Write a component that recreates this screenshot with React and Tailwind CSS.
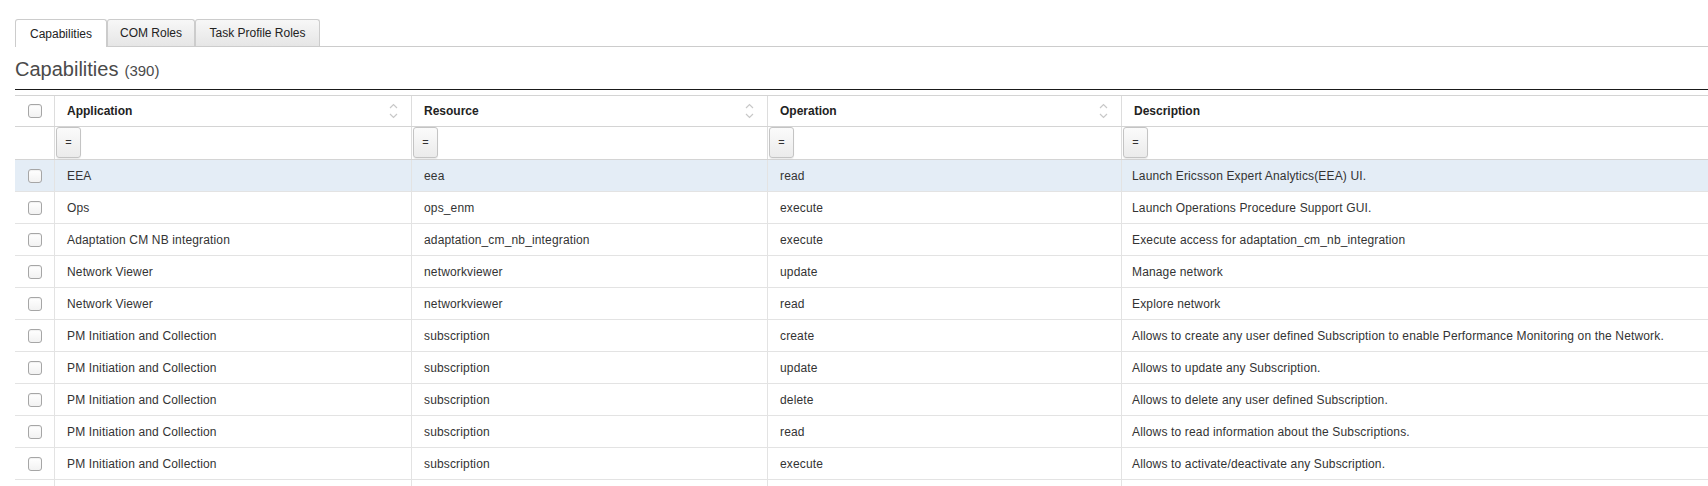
const ROWS = [
  ['EEA', 'eea', 'read', 'Launch Ericsson Expert Analytics(EEA) UI.'],
  ['Ops', 'ops_enm', 'execute', 'Launch Operations Procedure Support GUI.'],
  ['Adaptation CM NB integration', 'adaptation_cm_nb_integration', 'execute', 'Execute access for adaptation_cm_nb_integration'],
  ['Network Viewer', 'networkviewer', 'update', 'Manage network'],
  ['Network Viewer', 'networkviewer', 'read', 'Explore network'],
  ['PM Initiation and Collection', 'subscription', 'create', 'Allows to create any user defined Subscription to enable Performance Monitoring on the Network.'],
  ['PM Initiation and Collection', 'subscription', 'update', 'Allows to update any Subscription.'],
  ['PM Initiation and Collection', 'subscription', 'delete', 'Allows to delete any user defined Subscription.'],
  ['PM Initiation and Collection', 'subscription', 'read', 'Allows to read information about the Subscriptions.'],
  ['PM Initiation and Collection', 'subscription', 'execute', 'Allows to activate/deactivate any Subscription.'],
];

const COLS = 'grid grid-cols-[39px_357px_356px_354px_1fr]';

const Checkbox = () => (
  <span className="block w-[14px] h-[14px] rounded-[3px] border border-[#a6a6a6] bg-gradient-to-b from-white to-[#f2f2f2] shadow-[inset_0_1px_1px_rgba(0,0,0,0.06)]" />
);

const SortIcon = () => (
  <svg width="9" height="16" viewBox="0 0 9 16" fill="none" stroke="#c8c8c8" strokeWidth="1.2">
    <path d="M1 5 L4.5 1.5 L8 5" />
    <path d="M1 11 L4.5 14.5 L8 11" />
  </svg>
);

const Tab = ({ label, width, active }) => (
  <div
    className={`h-[27px] ${width} flex items-center justify-center rounded-t-[3px] border border-b-0 border-[#cccccc] text-[12px] text-[#222]
      ${active ? 'bg-white h-[28px] -mb-px relative' : 'bg-gradient-to-b from-[#f7f7f7] to-[#e6e6e6]'}`}
  >
    {label}
  </div>
);

const HeaderCell = ({ label, sortable }) => (
  <div className="border-l border-[#dddddd] flex items-center justify-between pl-[12px] pr-[13px]">
    <span className="font-bold text-[12px] text-[#222]">{label}</span>
    {sortable && <SortIcon />}
  </div>
);

const FilterCell = () => (
  <div className="border-l border-[#dddddd] pl-px">
    <div className="w-[25px] h-[31px] rounded-[3px] border border-[#c4c4c4] bg-gradient-to-b from-[#fbfbfb] to-[#ebebeb] flex items-center justify-center text-[11px] text-[#333] shadow-[0_1px_1px_rgba(0,0,0,0.08)]">
      =
    </div>
  </div>
);

export default function App() {
  return (
    <div className="w-[1708px] h-[486px] overflow-hidden bg-white font-['Liberation_Sans',Arial,sans-serif] text-[12px] text-[#333]">
      <div className="pl-[15px] pt-[19px]">
        <div className="flex items-end h-[28px] border-b border-[#cccccc]">
          <Tab label="Capabilities" width="w-[92px]" active />
          <Tab label="COM Roles" width="w-[88px]" />
          <Tab label="Task Profile Roles" width="w-[125px]" />
        </div>

        <div className="h-[43px] pt-[10px] border-b border-[#1a1a1a] flex items-baseline">
          <span className="text-[20px] leading-[24px] text-[#4a4a4a]">Capabilities</span>
          <span className="ml-[6px] text-[15px] leading-[24px] text-[#4a4a4a]">(390)</span>
        </div>

        <div className="mt-[5px]">
          <div className={`${COLS} h-[32px] border-y border-[#d4d4d4]`}>
            <div className="flex items-center justify-center"><Checkbox /></div>
            <HeaderCell label="Application" sortable />
            <HeaderCell label="Resource" sortable />
            <HeaderCell label="Operation" sortable />
            <HeaderCell label="Description" />
          </div>
          <div className={`${COLS} h-[33px] border-b border-[#d4d4d4]`}>
            <div />
            <FilterCell />
            <FilterCell />
            <FilterCell />
            <FilterCell />
          </div>
          {ROWS.map((row, i) => (
            <div key={i} className={`${COLS} h-[32px] border-b border-[#e3e3e3] ${i === 0 ? 'bg-[#e4edf6]' : ''}`}>
              <div className="flex items-center justify-center"><Checkbox /></div>
              {row.map((cell, j) => (
                <div key={j} className={`border-l border-[#e3e3e3] flex items-center whitespace-nowrap overflow-hidden tracking-[0.15px] ${j === 3 ? 'pl-[10px]' : 'pl-[12px]'}`}>
                  {cell}
                </div>
              ))}
            </div>
          ))}
          <div className={`${COLS} h-[32px] border-b border-[#e3e3e3]`}>
            <div />
            <div className="border-l border-[#e3e3e3]" />
            <div className="border-l border-[#e3e3e3]" />
            <div className="border-l border-[#e3e3e3]" />
            <div className="border-l border-[#e3e3e3]" />
          </div>
        </div>
      </div>
    </div>
  );
}
